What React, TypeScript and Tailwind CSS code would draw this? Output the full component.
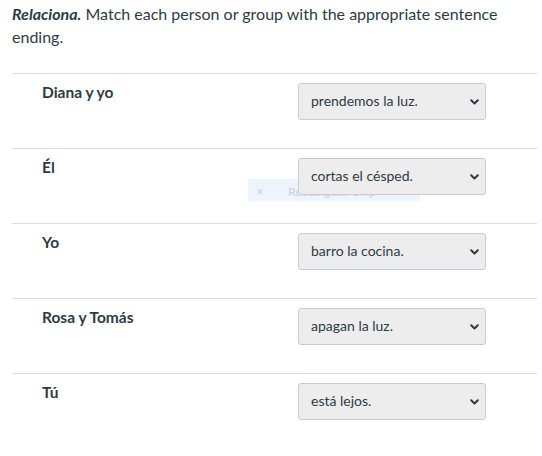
import React from "react";

const rows = [
  { label: "Diana y yo", value: "prendemos la luz." },
  { label: "Él", value: "cortas el césped." },
  { label: "Yo", value: "barro la cocina." },
  { label: "Rosa y Tomás", value: "apagan la luz." },
  { label: "Tú", value: "está lejos." },
];

function Chevron() {
  return (
    <svg width="9" height="6" viewBox="0 0 9 6" className="block">
      <path d="M1.2 1.2 L4.5 4.5 L7.8 1.2" fill="none" stroke="#2d3b45" strokeWidth="2" strokeLinecap="round" strokeLinejoin="round" />
    </svg>
  );
}

export default function App() {
  return (
    <div className="relative w-[542px] h-[456px] bg-white text-[#2d3b45]" style={{ fontFamily: "Lato, 'Open Sans', sans-serif" }}>
      <div className="px-[12px] pt-[2px] text-[16px] leading-[23px]">
        <span className="font-bold italic">Relaciona.</span> Match each person or group with the appropriate sentence ending.
      </div>
      <div className="mx-[12px] mt-[25px] w-[525px]">
        {rows.map((r) => (
          <div key={r.label} className="flex border-t border-[#dcdcdc] pt-[9px] pb-[28px]">
            <div className="w-[286px] pl-[30px] mt-[-2px] text-[15.5px] font-bold leading-[22px]">{r.label}</div>
            <div className="relative z-10 flex h-[37px] w-[188px] items-center justify-between rounded-[3px] border border-[#c7cdd1] bg-[#ededed] pl-[12px] pr-[6px] text-[14px]">
              <span className="mt-[-2px]">{r.value}</span>
              <Chevron />
            </div>
          </div>
        ))}
      </div>
      <div className="absolute left-[248px] top-[179px] z-0 flex h-[22px] w-[172px] items-end pb-[2px] bg-[#eef4fc] text-[12px] leading-[14px] text-[#c3d1e2]">
        <span className="ml-[8px] text-[9px]">✕</span>
        <span className="ml-[24px]">Rectangular Snip</span>
      </div>
    </div>
  );
}
